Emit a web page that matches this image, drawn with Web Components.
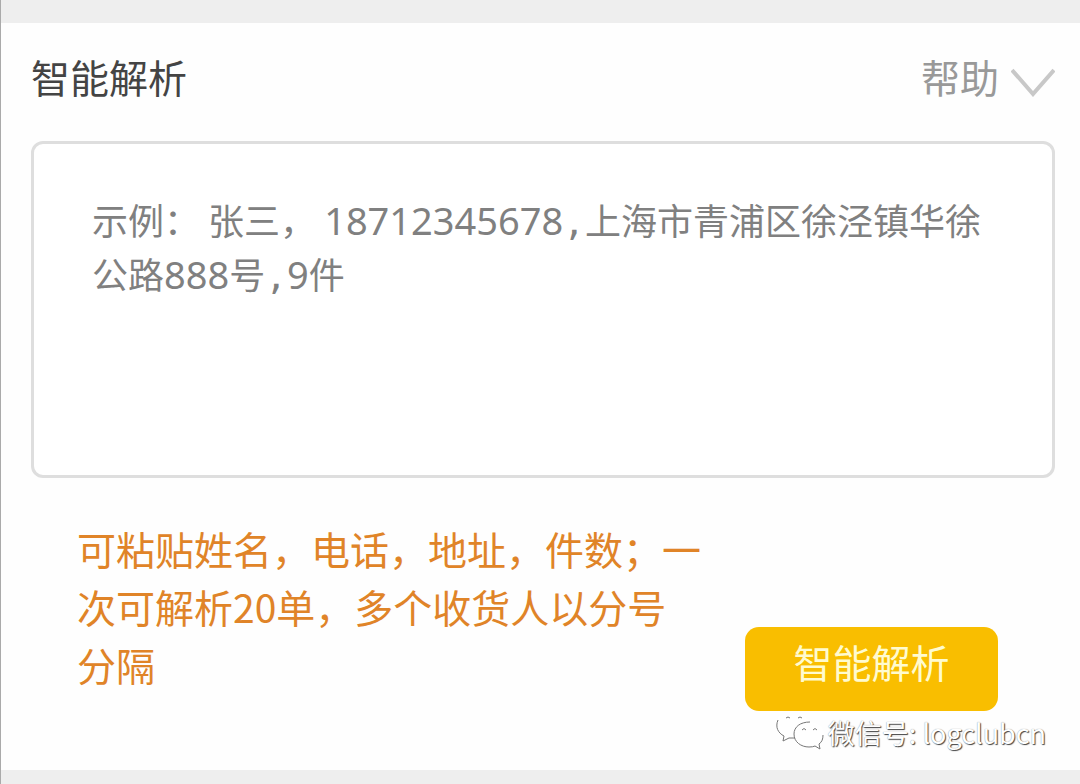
<!DOCTYPE html>
<html lang="zh-CN">
<head>
<meta charset="utf-8">
<meta name="viewport" content="width=device-width, initial-scale=1">
<title>智能解析</title>
<style>
html, body { margin: 0; min-height: 100%; background: #eeeeee; }
body { font-family: "Noto Sans CJK SC", sans-serif; }
</style>
</head>
<body>
<parse-page></parse-page>
<script>
function define(name, html) {
  customElements.define(name, class extends HTMLElement {
    constructor() {
      super();
      this.attachShadow({ mode: "open" }).innerHTML = html;
    }
  });
}

define("help-link", `
<style>
:host { display: block; }
a { display: flex; align-items: center; gap: 12px; color: #999; text-decoration: none; font-size: 39px; line-height: 58px; }
svg { display: block; width: 44px; height: 30px; margin-top: 12px; }
</style>
<a href="#help"><slot></slot>
<svg viewBox="0 0 44 30" fill="none" stroke="#c8c8c8" stroke-width="4" aria-hidden="true"><path d="M1 3 L22 27 L43 3"/></svg></a>`);

define("panel-header", `
<style>
:host { display: flex; justify-content: space-between; align-items: center; }
h1 { margin: 0; font-size: 39px; line-height: 58px; font-weight: 400; color: #444; }
</style>
<h1><slot></slot></h1><slot name="action"></slot>`);

define("address-input", `
<style>
:host { display: grid; height: 337px; box-sizing: border-box; border: 3px solid #dedede; border-radius: 12px; background: #fff; }
textarea, label { grid-area: 1 / 1; box-sizing: border-box; margin: 0; padding: 48px 58px; font-family: "Noto Sans CJK SC", sans-serif; font-size: 36px; line-height: 54px; }
textarea { width: 100%; height: 100%; border: 0; outline: 0; box-shadow: none; background: none; resize: none; color: #444; }
label { color: #808080; pointer-events: none; word-break: break-all; }
label span { font-family: "Noto Sans", sans-serif; font-size: 38px; line-height: 1; }
label i { font-family: "DejaVu Sans Mono", monospace; font-style: normal; line-height: 1; }
textarea:valid + label { visibility: hidden; }
</style>
<textarea id="t" required></textarea>
<label for="t">示例： 张三， <span>18712345678</span><i>,</i>上海市青浦区徐泾镇华徐<wbr>公路<span>888</span>号<i>,</i><span>9</span>件</label>`);

define("hint-text", `
<style>
:host { display: block; }
p { margin: 0; font-size: 39px; line-height: 58px; color: #e08428; word-break: break-all; }
</style>
<p><slot></slot></p>`);

define("primary-button", `
<style>
:host { display: block; }
button { display: block; width: 253px; height: 84px; border: 0; border-radius: 14px; padding: 0 0 16px; background: #f9be00; color: #fffbcf; font-family: inherit; font-size: 39px; line-height: 58px; }
</style>
<button type="button"><slot></slot></button>`);

define("wechat-mark", `
<style>
:host { display: flex; align-items: center; gap: 4px; }
svg { display: block; width: 48px; height: 36px; }
span { font-size: 27px; line-height: 36px; color: #fff; text-shadow: 1px 1px 1px #444, 0 0 1px #888; white-space: nowrap; }
</style>
<svg viewBox="0 0 48 36" fill="#fff" stroke="#777" stroke-width="1" aria-hidden="true">
<path stroke="none" d="M3 1 C-1 10 1 18 9 21 L7 26 L13 22 Q17 24 22 22 L33 6 Q30 2 27 1Z"/>
<path fill="none" d="M2 5 C-1 12 2 18 8 21 L7 26 L13 23 L19 23"/>
<path stroke="none" d="M33 7 C24 7 18 12 18 19 C18 27 25 32 33 32 Q37 32 39 30 L44 34 L43 29 C46 27 48 24 48 19 C48 12 42 7 33 7 Z"/>
<path fill="none" d="M34 7 C24 7 18 12 18 19 C18 27 25 32 33 32 Q37 32 39 31 L44 34 L43 29 C46 27 47 24 47 20"/>
<path fill="none" d="M10 3 q2 -2 4 0 M22 3 q2 -2 4 0 M26 15 q2 -3 4 0 M37 15 q2 -3 4 0"/>
</svg>
<span><slot></slot></span>`);

define("parse-page", `
<style>
:host { display: block; border-left: 1px solid #aaa; padding: 23px 0 14px; }
main { background: #fefefe; padding: 24px 25px 19px 30px; }
address-input { margin-top: 36px; }
.foot { display: flex; align-items: flex-start; justify-content: space-between; padding: 41px 57px 0 46px; }
hint-text { flex: 0 1 626px; }
primary-button { margin-top: 108px; }
footer { display: flex; justify-content: flex-end; padding: 4px 9px 0 0; }
</style>
<main>
<panel-header>智能解析<help-link slot="action">帮助</help-link></panel-header>
<address-input></address-input>
<div class="foot">
<hint-text>可粘贴姓名，电话，地址，件数；一次可解析20单，多个收货人以分号分隔</hint-text>
<primary-button>智能解析</primary-button>
</div>
<footer><wechat-mark>微信号: logclubcn</wechat-mark></footer>
</main>`);
</script>
</body>
</html>
